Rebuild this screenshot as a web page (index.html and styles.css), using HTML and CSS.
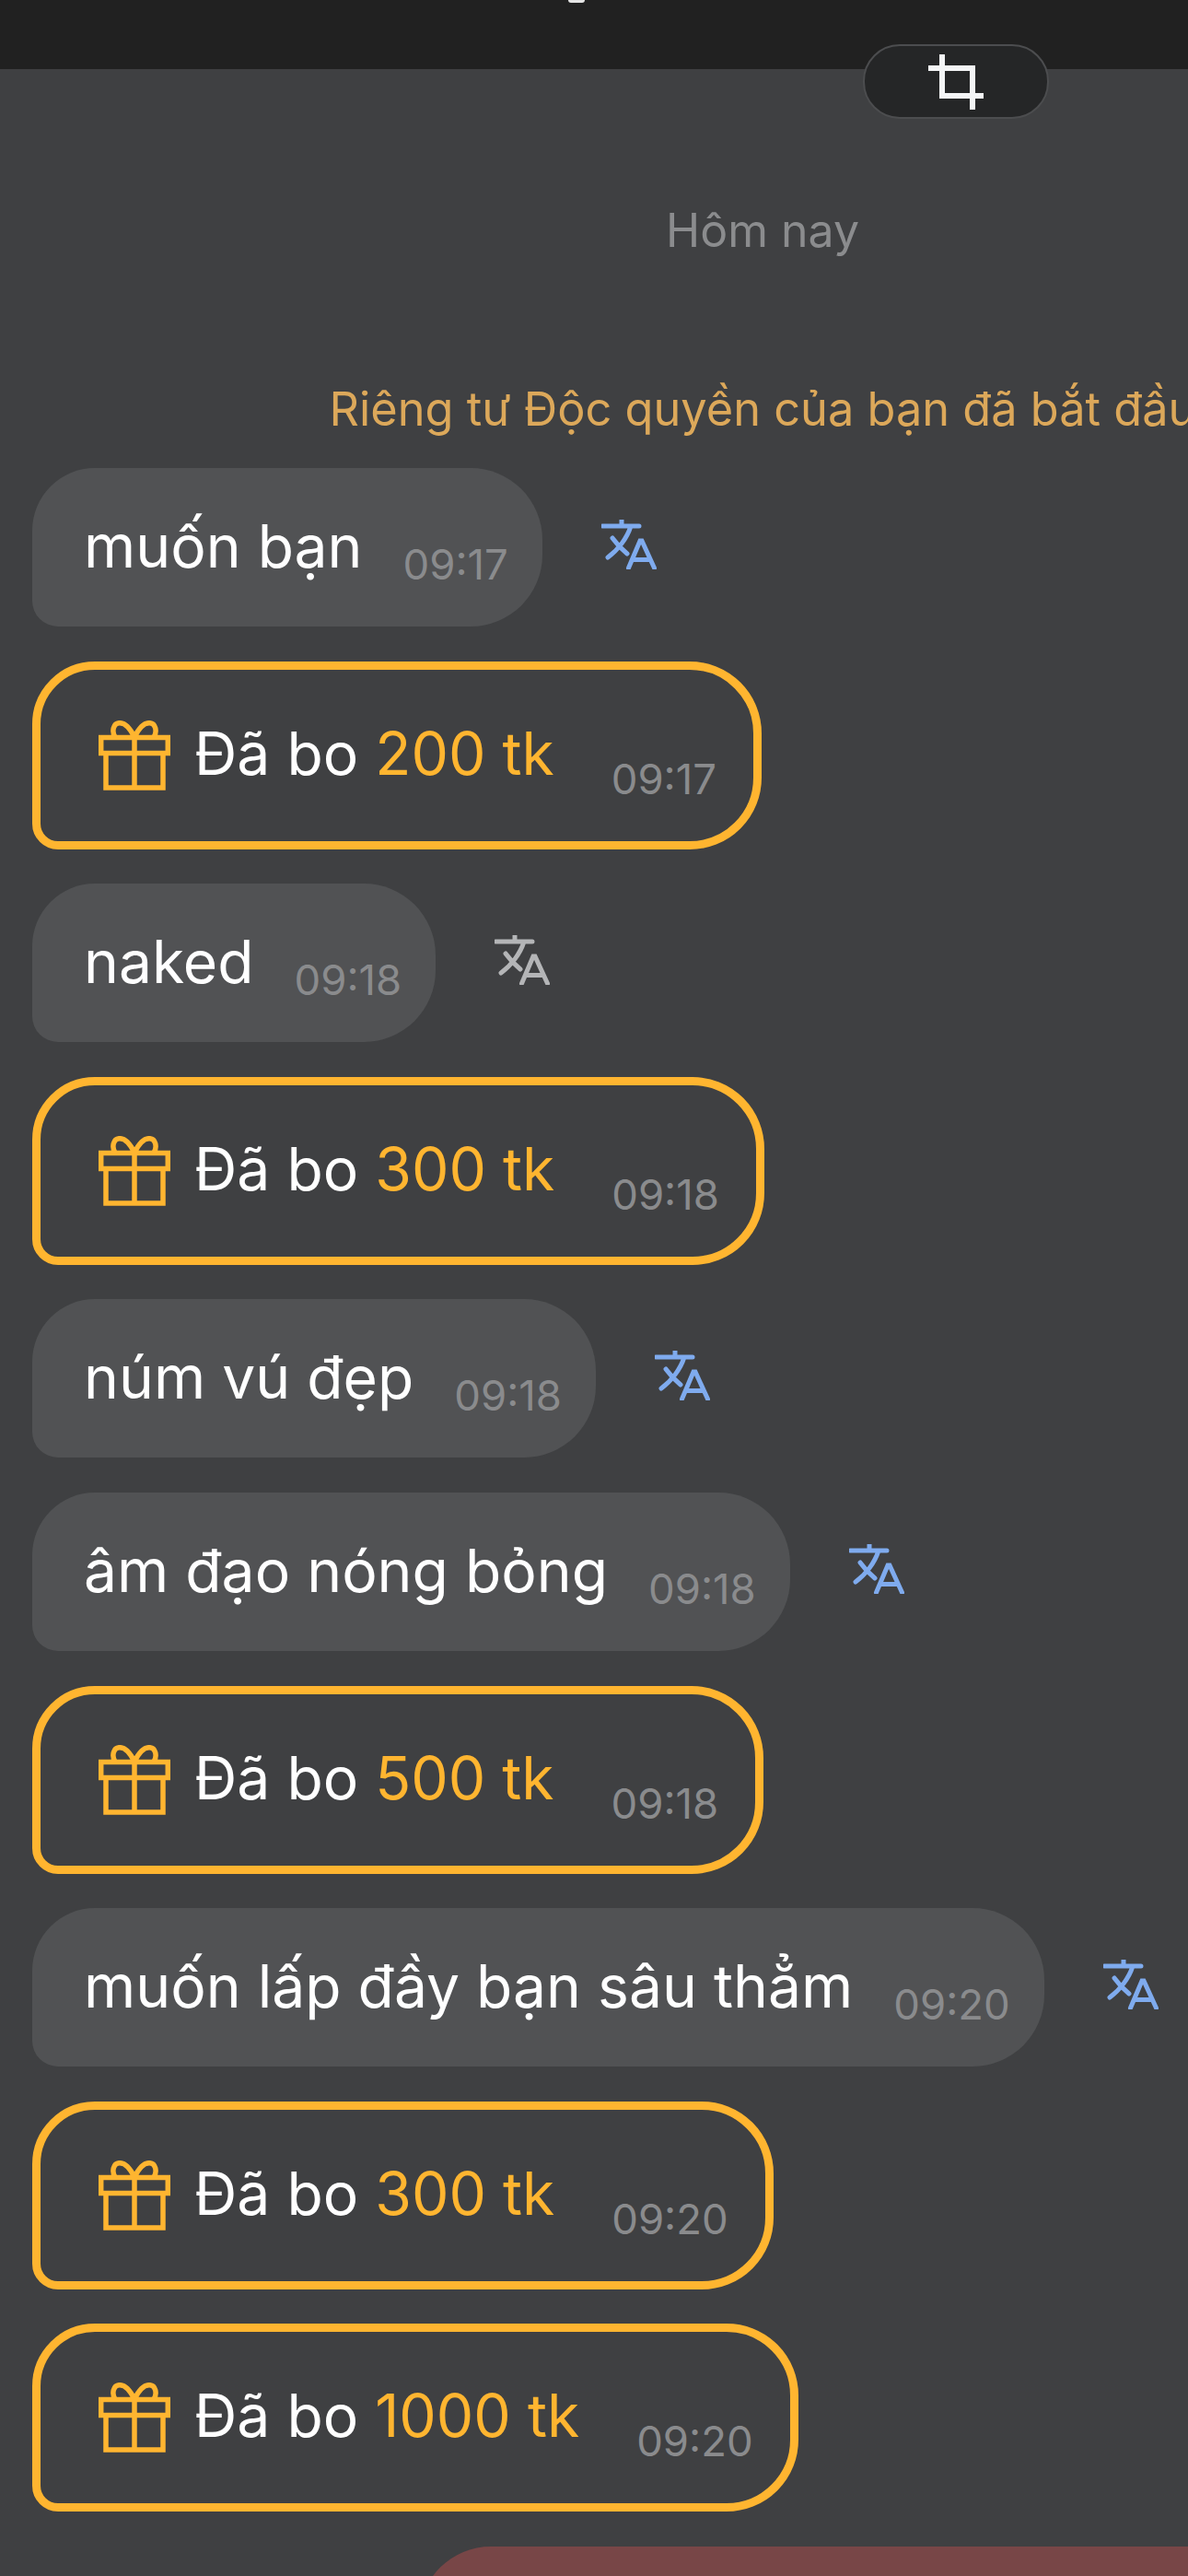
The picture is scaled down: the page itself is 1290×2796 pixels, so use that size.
FILE: index.html
```html
<!DOCTYPE html>
<html lang="vi">
<head>
<meta charset="UTF-8" />
<meta name="viewport" content="width=device-width, initial-scale=1" />
<title>Chat</title>
<link rel="stylesheet" href="styles.css">
</head>
<body>

<svg width="0" height="0" class="icon-defs">
  <symbol id="gift" viewBox="0 0 78 76">
    <path d="M2.7 18.5h72.6v17H2.7zM8 35.5h62V73H8zM39 18.5V73M39 18C34 8 28 2.7 23 2.7 16 2.7 14 12 18 18M39 18C44 8 50 2.7 55 2.7 62 2.7 64 12 60 18" />
  </symbol>
  <symbol id="translate" viewBox="0 0 60 54">
    <path d="M1 7h40M22 0v7M32 7C28 20 18 33 7 41M12 20c5 7 10 12 16 17" />
    <path d="M29.5 52.5L42 23h2l13.500 29.500M34 43.500h19" />
  </symbol>
</svg>

<header class="topbar">
  <span class="topbar-mark"></span>
</header>

<button class="crop-btn">
  <svg width="60" height="60" viewBox="0 0 60 60">
    <path d="M1 15h47v44M15 1v44h44" />
  </svg>
</button>

<main class="chat">
  <div class="day">Hôm nay</div>
  <div class="notice">Riêng tư Độc quyền của bạn đã bắt đầu</div>

  <div class="messages">
    <div class="msg">
      <div class="bubble"><span class="text">muốn bạn</span><time>09:17</time></div>
      <svg class="tr-icon"><use href="#translate" /></svg>
    </div>
    <div class="msg">
      <div class="tip">
        <svg class="gift-icon"><use href="#gift" /></svg>
        <span class="text">Đã bo <b>200 tk</b></span><time>09:17</time>
      </div>
    </div>
    <div class="msg">
      <div class="bubble"><span class="text">naked</span><time>09:18</time></div>
      <svg class="tr-icon muted"><use href="#translate" /></svg>
    </div>
    <div class="msg">
      <div class="tip">
        <svg class="gift-icon"><use href="#gift" /></svg>
        <span class="text">Đã bo <b>300 tk</b></span><time>09:18</time>
      </div>
    </div>
    <div class="msg">
      <div class="bubble"><span class="text">núm vú đẹp</span><time>09:18</time></div>
      <svg class="tr-icon"><use href="#translate" /></svg>
    </div>
    <div class="msg">
      <div class="bubble"><span class="text">âm đạo nóng bỏng</span><time>09:18</time></div>
      <svg class="tr-icon"><use href="#translate" /></svg>
    </div>
    <div class="msg">
      <div class="tip">
        <svg class="gift-icon"><use href="#gift" /></svg>
        <span class="text">Đã bo <b>500 tk</b></span><time>09:18</time>
      </div>
    </div>
    <div class="msg">
      <div class="bubble"><span class="text">muốn lấp đầy bạn sâu thẳm</span><time>09:20</time></div>
      <svg class="tr-icon"><use href="#translate" /></svg>
    </div>
    <div class="msg">
      <div class="tip">
        <svg class="gift-icon"><use href="#gift" /></svg>
        <span class="text">Đã bo <b>300 tk</b></span><time>09:20</time>
      </div>
    </div>
    <div class="msg">
      <div class="tip">
        <svg class="gift-icon"><use href="#gift" /></svg>
        <span class="text">Đã bo <b>1000 tk</b></span><time>09:20</time>
      </div>
    </div>
    <div class="msg mine">
      <div class="bubble-mine"></div>
    </div>
  </div>
</main>

</body>
</html>
```

FILE: styles.css
```css
html, body {
  margin: 0;
  padding: 0;
  height: 2796px;
  overflow: hidden;
}
body {
  position: relative;
  width: 1290px;
  background: #3f4042;
  font-family: Inter, "Noto Sans", sans-serif;
  color: #fff;
}
.icon-defs {
  position: absolute;
}

.topbar {
  height: 75px;
  background: #212121;
  display: flex;
  justify-content: center;
}
.topbar-mark {
  width: 18px;
  height: 3px;
  margin-left: -38px;
  background: #e4e4e4;
  border-radius: 0 0 9px 9px;
}

/* floats over the top bar edge */
.crop-btn {
  position: absolute;
  left: 937px;
  top: 48px;
  width: 202px;
  height: 81px;
  padding: 0;
  display: flex;
  align-items: center;
  justify-content: center;
  background: #252627;
  border: 2px solid #4c4d4f;
  border-radius: 40px;
}
.crop-btn svg {
  fill: none;
  stroke: #f4f5f6;
  stroke-width: 6;
  stroke-linecap: round;
}

/* column is wider than the screen, the right side gets cut off */
.chat {
  width: 1656px;
}
.day {
  margin-top: 144px;
  text-align: center;
  font-size: 50px;
  line-height: 62px;
  color: #8b8c8e;
}
.notice {
  margin-top: 132px;
  text-align: center;
  font-size: 50.5px;
  line-height: 62px;
  color: #dca85a;
}
.messages {
  margin-top: 33px;
  padding-left: 35px;
  display: flex;
  flex-direction: column;
  gap: 37.6px;
}
.msg {
  display: flex;
  align-items: center;
}
.text {
  font-size: 64.2px;
  line-height: 72px;
}
time {
  font-size: 45.5px;
  line-height: 52px;
  color: #8a8b8d;
  margin-top: 38px;
}
.bubble {
  height: 172px;
  box-sizing: border-box;
  padding: 0 37px 0 56px;
  display: flex;
  align-items: center;
  gap: 44px;
  background: #515254;
  border-radius: 68px 78px 78px 28px;
}
.bubble .text {
  margin-top: -2px;
}
.tr-icon {
  width: 60px;
  height: 54px;
  margin-left: 64px;
  margin-bottom: 6px;
  fill: none;
  stroke: #7fabee;
  stroke-width: 5;
  stroke-linecap: round;
}
.tr-icon.muted {
  stroke: #b4b5b7;
}
.tip {
  height: 204px;
  box-sizing: border-box;
  padding: 0 40px 0 63px;
  display: flex;
  align-items: center;
  border: 9px solid #ffb530;
  border-radius: 68px 78px 78px 28px;
}
.tip b {
  font-weight: 400;
  color: #ffb530;
}
.tip .text {
  margin-left: 26px;
  margin-right: 62px;
  margin-top: -4px;
}
.tip time {
  margin-top: 52px;
}
.gift-icon {
  width: 78px;
  height: 76px;
  flex-shrink: 0;
  fill: none;
  stroke: #ffb530;
  stroke-width: 5.5;
}
.mine {
  padding-left: 420px;
}
.bubble-mine {
  width: 1000px;
  height: 172px;
  background: #784647;
  border-radius: 78px 0 0 78px;
}
```
